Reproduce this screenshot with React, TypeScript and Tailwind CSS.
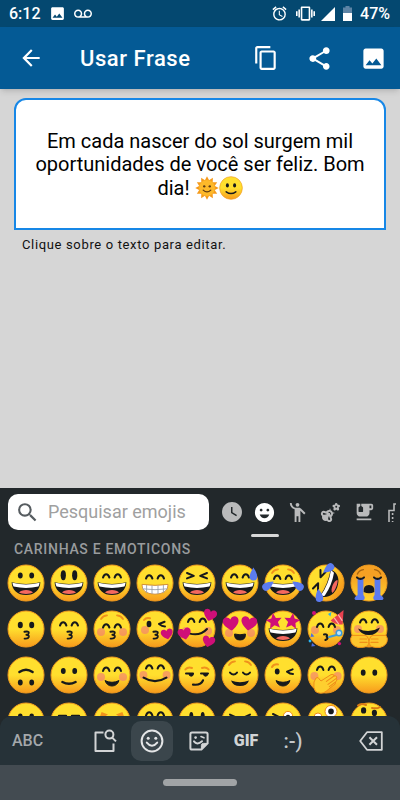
import React from "react";
import {
  MdAlarm,
  MdArrowBack,
  MdContentCopy,
  MdEmojiEmotions,
  MdEmojiFoodBeverage,
  MdEmojiNature,
  MdEmojiPeople,
  MdImage,
  MdSearch,
  MdShare,
  MdVibration,
  MdVoicemail,
  MdWatchLater,
} from "react-icons/md";

const INK = "#16191c";
const PINK = "#cf0f78";
const TEAR = "#5b7bf0";
const BROW = "#f0911c";

/* ---------- emoji parts, all drawn around 0,0 ---------- */

const Head = ({ fill = "url(#skin)" }: { fill?: string }) => (
  <circle r="18" fill={fill} stroke="#f09a1d" strokeWidth="1" />
);

const Dots = ({ y = -7, rx = 2.4, ry = 3, gap = 5.7 }: { y?: number; rx?: number; ry?: number; gap?: number }) => (
  <g fill={INK}>
    <ellipse cx={-gap} cy={y} rx={rx} ry={ry} />
    <ellipse cx={gap} cy={y} rx={rx} ry={ry} />
  </g>
);

const Arcs = ({ y = -5 }: { y?: number }) => (
  <g transform={`translate(0 ${y})`} fill="none" stroke={INK} strokeWidth="2" strokeLinecap="round">
    <path d="M-9 0Q-8 -3.4 -5.8 -3.4T-2.6 0" />
    <path d="M9 0Q8 -3.4 5.8 -3.4T2.6 0" />
  </g>
);

const Squint = () => (
  <g fill="none" stroke={INK} strokeWidth="2" strokeLinecap="round" strokeLinejoin="round">
    <path d="M-10 -10L-3.2 -7.2L-10 -4.6" />
    <path d="M10 -10L3.2 -7.2L10 -4.6" />
  </g>
);

const Grin = () => (
  <g>
    <path d="M-14.4 -.8Q0 2.6 14.4 -.8C14 7 8.6 12 0 12S-14 7 -14.4 -.8Z" fill={INK} />
    <path d="M-13.6 -.2Q0 3.2 13.6 -.2Q13.3 2 12.4 3.6Q0 6.4 -12.4 3.6Q-13.3 2 -13.6 -.2Z" fill="#fff" />
    <path d="M-7 9.6C-5 6.2 5 6.2 7 9.6C4.6 11.4 -4.6 11.4 -7 9.6Z" fill="#f4685f" />
  </g>
);

const SmallSmile = ({ y = 6 }: { y?: number }) => (
  <path d={`M-7 ${y}Q0 ${y + 3.4} 7 ${y}Q5 ${y + 5.4} 0 ${y + 5.4}T-7 ${y}Z`} fill={INK} stroke={INK} strokeWidth="1" strokeLinejoin="round" />
);

const Line = ({ d, color = INK, w = 2 }: { d: string; color?: string; w?: number }) => (
  <path d={d} fill="none" stroke={color} strokeWidth={w} strokeLinecap="round" strokeLinejoin="round" />
);

const KissMouth = () => <Line d="M-1.6 2.8Q3 1.8 2.8 4Q2.6 5.6 .4 5.8Q3.2 6 2.8 8Q2.2 10 -1.4 9.6" w={1.9} />;

const Blush = ({ y = 2, x = 11 }: { y?: number; x?: number }) => (
  <g fill="#f2777a" opacity=".6">
    <circle cx={-x} cy={y} r="4" />
    <circle cx={x} cy={y} r="4" />
  </g>
);

const Brows = () => <Line d="M-11 -10Q-9 -13.4 -5 -13.6M11 -10Q9 -13.4 5 -13.6" color={BROW} w={1.8} />;

const Heart = ({ x, y, s = 1, r = 0 }: { x: number; y: number; s?: number; r?: number }) => (
  <path
    transform={`translate(${x} ${y}) rotate(${r}) scale(${s})`}
    d="M0 6C-3 4 -6.6 1 -6.6 -2C-6.6 -6 -1.6 -6.6 0 -3.2C1.6 -6.6 6.6 -6 6.6 -2C6.6 1 3 4 0 6Z"
    fill={PINK}
  />
);

const Star = ({ x, y, r = 0 }: { x: number; y: number; r?: number }) => (
  <path
    transform={`translate(${x} ${y}) rotate(${r})`}
    d="M0 -8L2.3 -2.8L8 -2.2L3.7 1.6L5 7.2L0 4.3L-5 7.2L-3.7 1.6L-8 -2.2L-2.3 -2.8Z"
    fill={PINK}
  />
);

const Drop = ({ x, y, r = 0 }: { x: number; y: number; r?: number }) => (
  <path transform={`translate(${x} ${y}) rotate(${r})`} d="M0 -7Q3.8 -1 3.8 2.4A3.8 3.8 0 0 1 -3.8 2.4Q-3.8 -1 0 -7Z" fill={TEAR} />
);

const WinkEye = () => <Line d="M9.6 -9.6L4 -7.4Q7 -5 10 -5" />;

const emojis: { name: string; art: React.ReactNode }[] = [
  { name: "rosto sorridente", art: <><Head /><Dots y={-7.4} /><Grin /></> },
  { name: "rosto com olhos grandes", art: <><Head /><Dots y={-7.8} rx={2.6} ry={5} /><Grin /></> },
  { name: "rosto com olhos sorridentes", art: <><Head /><Arcs y={-5.4} /><Grin /></> },
  {
    name: "rosto contente",
    art: (
      <>
        <Head />
        <Arcs y={-4.4} />
        <path d="M-13 1.4Q0 3.4 13 1.4Q13.4 10.8 0 11.2Q-13.4 10.8 -13 1.4Z" fill="#fff" stroke="#c67c2c" strokeWidth=".8" />
        <path d="M-12.6 5.8Q0 7.6 12.6 5.8M-8.4 2V9.8M-3 2.4V11M3 2.4V11M8.4 2V9.8" fill="none" stroke="#99a2aa" strokeWidth=".9" />
      </>
    ),
  },
  { name: "rosto com olhos semicerrados", art: <><Head /><Squint /><Grin /></> },
  { name: "rosto com gota de suor", art: <><Head /><Arcs y={-5.4} /><Grin /><Drop x={13.4} y={-8.6} /></> },
  {
    name: "rosto chorando de rir",
    art: (
      <>
        <Head /><Brows /><Arcs y={-4} /><Grin />
        <Drop x={-15} y={2.6} r={55} /><Drop x={15} y={2.6} r={-55} />
      </>
    ),
  },
  {
    name: "rolando no chão de rir",
    art: (
      <>
        <Head fill="url(#skinSide)" />
        <g transform="rotate(-68)">
          <Squint />
          <Grin />
          <Drop x={-14.4} y={-1.6} r={60} />
          <Drop x={14.4} y={-3} r={-60} />
        </g>
      </>
    ),
  },
  {
    name: "rosto chorando alto",
    art: (
      <>
        <Head fill="url(#skinSad)" />
        <Line d="M-11.6 -9Q-10 -12.8 -5.6 -13.4M11.6 -9Q10 -12.8 5.6 -13.4" color="#a8650f" w={1.4} />
        <path d="M-5.4 9Q-6 2 0 2T5.4 9Q0 11.6 -5.4 9Z" fill={INK} />
        <path d="M-11.4 -5H-5.6V12Q-3 15 -5.4 17H-13.4Q-16.4 15.4 -11.4 12ZM11.4 -5H5.6V12Q3 15 5.4 17H13.4Q16.4 15.4 11.4 12Z" fill={TEAR} />
        <Line d="M-12 -5.6Q-8.6 -2.6 -5 -5.6M12 -5.6Q8.6 -2.6 5 -5.6" />
      </>
    ),
  },

  { name: "rosto beijando", art: <><Head /><Dots y={-4} rx={2.5} ry={3.2} /><KissMouth /></> },
  { name: "beijo com olhos sorridentes", art: <><Head /><Arcs y={-3.4} /><KissMouth /></> },
  { name: "beijo com olhos fechados", art: <><Head /><Blush y={3} /><Brows /><Arcs y={-1.4} /><KissMouth /></> },
  {
    name: "rosto mandando beijo",
    art: (
      <>
        <Head />
        <circle cx="-10" cy="1" r="4" fill="#f2777a" opacity=".6" />
        <Line d="M-11 -9Q-9 -11.8 -5 -10.8" color={BROW} />
        <ellipse cx="-6" cy="-5" rx="2.4" ry="3.2" fill={INK} />
        <g transform="translate(0 2.4)"><WinkEye /></g>
        <KissMouth />
        <Heart x={12} y={5} s={0.9} r={-12} />
      </>
    ),
  },
  {
    name: "rosto com três corações",
    art: (
      <>
        <Head /><Blush /><Arcs y={-7} />
        <Line d="M-8 4.4Q3 7.6 10 0" />
        <Heart x={13} y={-14} r={16} /><Heart x={-12.4} y={4.6} r={-14} /><Heart x={11.6} y={12.4} s={0.95} r={14} />
      </>
    ),
  },
  {
    name: "olhos de coração",
    art: (
      <>
        <Head /><Blush y={4} />
        <Heart x={-9} y={-5.6} s={1.2} r={-8} /><Heart x={9} y={-5.6} s={1.2} r={8} />
        <path d="M-5.4 5Q0 6.6 5.4 5Q5.8 11 0 11T-5.4 5Z" fill={INK} stroke={INK} strokeLinejoin="round" />
      </>
    ),
  },
  { name: "olhos de estrela", art: <><Head /><Grin /><Star x={-9} y={-8} r={-8} /><Star x={9} y={-8} r={8} /></> },
  {
    name: "rosto festivo",
    art: (
      <>
        <Head /><Blush y={1} /><Arcs y={-2} />
        <path d="M4.6 -8.4L17.6 -19L16.6 -4.6Q10 -3.6 4.6 -8.4Z" fill="#e8414f" />
        <Line d="M8.4 -10.8L12.6 -5.2M12.4 -14L16 -8.6" color="#f9b7b0" w={1.2} />
        <Line d="M-2 5.4Q2.4 5 .6 7.6Q3 9.4 -.6 11" />
        <Line d="M3 8L10.4 6" color="#3d9bd8" />
        <circle cx="13" cy="4" r="2.8" fill="#bfe6f7" stroke="#3d9bd8" strokeWidth="1.5" />
        <circle cx="-12" cy="-16" r="2" fill={PINK} />
        <path d="M2 -15L5.4 -17L4.4 -12.6Z" fill="#27b2ea" />
        <path d="M-14.6 4L-11.6 7.4L-15.4 8ZM-14 14L-10.6 17L-14.6 17.4Z" fill="#4a6fe6" />
        <circle cx="-16" cy="12" r="1.4" fill="#29b6f6" />
        <circle cx="13.4" cy="14.6" r="1.7" fill={PINK} />
      </>
    ),
  },
  {
    name: "rosto abraçando",
    art: (
      <>
        <Head /><Blush y={0} /><Arcs y={-6.4} />
        <path d="M-11 -.6Q0 5 11 -1.6Q8 6 0 6T-11 -.6Z" fill={INK} />
        <path d="M-17 6.4H-4Q-1.4 6.6 -1 9.4Q1 12 -1.4 17Q-5 19 -11 18.4Q-18.6 16.6 -18.4 9.6Z" fill="#fdc62d" stroke="#f08f18" strokeWidth="1" />
        <path d="M17 6.4H4Q1.4 6.6 1 9.4Q-1 12 1.4 17Q5 19 11 18.4Q18.6 16.6 18.4 9.6Z" fill="#fdc62d" stroke="#f08f18" strokeWidth="1" />
        <Line d="M-9 10H-2.4M-9 13.4H-2M9 10H2.4M9 13.4H2" color="#f08f18" w={1.2} />
      </>
    ),
  },

  { name: "rosto de cabeça para baixo", art: <><Head /><Dots y={7.6} rx={2.4} ry={3} /><Line d="M-6.6 -3Q0 -7.6 6.6 -3" w={2.4} /></> },
  { name: "rosto levemente sorridente", art: <><Head /><Dots y={-4} rx={2.4} ry={3} /><Line d="M-6.6 7Q0 10.4 6.6 7" w={2.4} /></> },
  { name: "rosto corado", art: <><Head /><Blush /><Arcs y={-4} /><SmallSmile y={5.6} /></> },
  { name: "rosto sorrindo", art: <><Head /><Blush y={0} x={11.6} /><Arcs y={-6.4} /><Line d="M-11.4 2.6Q0 9.6 11.4 2.6" w={2.2} /></> },
  {
    name: "sorriso maroto",
    art: (
      <>
        <Head />
        <Line d="M-11.6 -5.6Q-9 -8.4 -5 -7M11.6 -5.6Q9 -8.4 5 -7" color={BROW} />
        <Line d="M-11 -1.4H-4M4 -1.4H11" />
        <path d="M-8 -1.4H-3.6A2.2 2.6 0 0 1 -8 -1.4ZM6.4 -1.4H10.8A2.2 2.6 0 0 1 6.4 -1.4Z" fill={INK} stroke={INK} />
        <Line d="M-4 9.6Q4 10.6 6 5.4" w={2.2} />
      </>
    ),
  },
  {
    name: "rosto aliviado",
    art: (
      <>
        <Head /><Brows />
        <Line d="M-10 -2.4Q-6.4 1.4 -3 -2.4M10 -2.4Q6.4 1.4 3 -2.4" />
        <path d="M-9 5.4Q0 9 9 5.4Q7 11 0 11T-9 5.4Z" fill={INK} />
      </>
    ),
  },
  {
    name: "rosto piscando",
    art: (
      <>
        <Head />
        <Line d="M-11 -8Q-9.4 -11 -5 -10.6" color={BROW} />
        <ellipse cx="-5.8" cy="-3.4" rx="2.4" ry="3" fill={INK} />
        <g transform="translate(0 4)"><WinkEye /></g>
        <SmallSmile y={5.6} />
      </>
    ),
  },
  {
    name: "mão sobre a boca",
    art: (
      <>
        <Head /><Blush y={1} x={11.6} /><Arcs y={-5} />
        <path d="M-12 7L-10 3Q-8 1 -6 5L-5 6L5 -.4Q8 -1.6 8 1Q11.4 .4 10.4 3.4Q12 4.8 9.6 7Q10 9.6 7 10.6L0 16.4Q-5 20 -10.4 16.6Q-13 13 -12 7Z" fill="#fecf2f" stroke="#f08f18" strokeWidth="1" />
        <Line d="M8 1L.4 6.4M10 3.6L2 9.4M9.2 7.2L3.4 11.6" color="#f08f18" w={1.1} />
      </>
    ),
  },
  { name: "rosto sem boca", art: <><Head /><Dots y={-2.4} rx={2.4} ry={3.2} gap={5.8} /></> },

  { name: "rosto neutro", art: <><Head /><Dots y={-4.4} /><Line d="M-7 7H7" /></> },
  { name: "rosto inexpressivo", art: <><Head /><Line d="M-10 -5H-3M3 -5H10M-7 7H7" w={2.4} /></> },
  {
    name: "rosto perseverante",
    art: (
      <>
        <Head />
        <path d="M-12 -4.6L-10.4 -9L-4 -6.4L-8 -4ZM12 -4.6L10.4 -9L4 -6.4L8 -4Z" fill={BROW} />
        <Line d="M-7 9Q0 5 7 9" />
      </>
    ),
  },
  { name: "saboreando", art: <><Head /><Arcs y={-5.4} /><Line d="M-9 4Q0 10 9 4" /></> },
  { name: "rosto com a língua de fora", art: <><Head /><Dots y={-4.6} rx={2} ry={4.4} /><Grin /></> },
  {
    name: "língua com olhos fechados",
    art: <><Head /><Line d="M-10 -6.4L-4 -3.6L-10 -1M10 -6.4L4 -3.6L10 -1" /><Line d="M-8 5Q0 10 8 5" /></>,
  },
  {
    name: "língua com piscadela",
    art: <><Head /><Line d="M-10 -7L-4 -4L-10 -2" /><circle cx="5" cy="-5" r="4.6" fill="#fff" stroke="#f08f18" /><circle cx="5" cy="-4" r="2.2" fill={INK} /><Line d="M-8 6Q0 11 8 6" /></>,
  },
  {
    name: "rosto maluco",
    art: (
      <>
        <Head />
        <circle cx="5" cy="-9.6" r="6" fill="#fff" stroke="#f08f18" />
        <circle cx="5" cy="-9.6" r="2.8" fill={INK} />
        <circle cx="-8" cy="-4" r="4" fill="#fff" stroke="#f08f18" />
      </>
    ),
  },
  {
    name: "sobrancelha levantada",
    art: <><Head /><Line d="M-11 -15.6Q-8 -18.4 -3 -16M3 -13Q8 -12 11 -14" color="#d97a14" /><ellipse cx="-5.4" cy="-10.6" rx="2.6" ry="3.2" fill={INK} /><ellipse cx="5.4" cy="-8" rx="2.6" ry="3.2" fill={INK} /></>,
  },
];

const InlineSun = () => (
  <svg viewBox="-19 -19 38 38" role="img" aria-label="sol com rosto" className="inline-block size-6 align-[-5px]">
    {Array.from({ length: 12 }, (_, i) => (
      <path key={i} transform={`rotate(${i * 30})`} d="M-4 -11L0 -18.6L4 -11Z" fill="#f59a1c" />
    ))}
    <circle r="12.6" fill="#fdb92a" />
    <circle cx="-4.4" cy="-2.6" r="1.9" fill="#5d3a12" />
    <circle cx="4.4" cy="-2.6" r="1.9" fill="#5d3a12" />
    <Line d="M-6 3.4Q0 9 6 3.4" color="#5d3a12" />
  </svg>
);

const InlineSmile = () => (
  <svg viewBox="-19 -19 38 38" role="img" aria-label="rosto levemente sorridente" className="inline-block size-6 align-[-5px]">
    <Head /><Dots y={-4} rx={2.4} ry={3.4} />
    <Line d="M-7.6 6Q0 11.6 7.6 6" w={2.4} />
  </svg>
);

/* ---------- keyboard icons ---------- */

const TransportIcon = () => (
  <svg viewBox="0 0 22 22" className="size-[22px] shrink-0" fill="none" stroke="#b9babb" strokeWidth="1.6">
    <path d="M3 21V9.5H8V3H18V21" />
    <path d="M6.6 12V21M11 6V21" strokeDasharray="2 2" />
  </svg>
);

const EmojiKitIcon = () => (
  <svg viewBox="0 0 24 24" className="size-6" fill="none" stroke="#d2d4d5" strokeWidth="2">
    <path d="M10.5 3.5H2.5V22H20.5V14.5" strokeLinejoin="round" />
    <circle cx="16.4" cy="5.6" r="4" />
    <path d="M19.2 8.6L23 12.4" />
  </svg>
);

const FaceIcon = () => (
  <svg viewBox="0 0 24 24" className="size-6" fill="none" stroke="#e4e5e6" strokeWidth="2">
    <circle cx="12" cy="12" r="10.4" />
    <path d="M6.8 13.6Q12 20 17.2 13.6" strokeLinecap="round" />
    <circle cx="8.2" cy="9.2" r="1.5" fill="#e4e5e6" stroke="none" />
    <circle cx="15.8" cy="9.2" r="1.5" fill="#e4e5e6" stroke="none" />
  </svg>
);

const StickerIcon = () => (
  <svg viewBox="0 0 20 20" className="size-5" fill="none" stroke="#d2d4d5" strokeWidth="2" strokeLinejoin="round">
    <path d="M3 1.4H17Q18.6 1.4 18.6 3V12.4L12.4 18.6H3Q1.4 18.6 1.4 17V3Q1.4 1.4 3 1.4Z" />
    <path d="M18.6 12.4H14.4Q12.4 12.4 12.4 14.4V18.6Z" fill="#d2d4d5" strokeWidth="1" />
    <path d="M5 10.4Q8 14.6 13 10.2" strokeLinecap="round" />
    <path d="M12 5.6L15 6.8" strokeLinecap="round" strokeWidth="1.6" />
    <circle cx="6.6" cy="6.6" r="1.3" fill="#d2d4d5" stroke="none" />
  </svg>
);

const BackspaceIcon = () => (
  <svg viewBox="0 0 24 20" className="h-5 w-6" fill="none" stroke="#d2d4d5" strokeWidth="1.8" strokeLinejoin="round">
    <path d="M8 1.2H22.8V18.8H8L1.2 10Z" />
    <path d="M10.4 6.2L18 13.8M18 6.2L10.4 13.8" strokeWidth="2" />
  </svg>
);

const BatteryIcon = () => (
  <svg viewBox="0 0 9 15" className="ml-2 h-[15px] w-[9px]">
    <path d="M2.5 0H6.5V1.5H9V7H0V1.5H2.5Z" fill="#5d84a5" />
    <path d="M0 7H9V15H0Z" fill="#fff" />
  </svg>
);

const tabs = [
  { label: "Recentes", icon: <MdWatchLater size={24} /> },
  { label: "Carinhas", icon: <MdEmojiEmotions size={23} />, active: true },
  { label: "Pessoas", icon: <MdEmojiPeople size={23} /> },
  { label: "Natureza", icon: <MdEmojiNature size={23} /> },
  { label: "Comidas", icon: <MdEmojiFoodBeverage size={22} /> },
  { label: "Viagens", icon: <TransportIcon /> },
];

const navItems = [
  { label: "Buscar", icon: <EmojiKitIcon /> },
  { label: "Emojis", icon: <FaceIcon />, active: true },
  { label: "Figurinhas", icon: <StickerIcon /> },
  { label: "GIF", icon: <span className="text-base font-black text-[#d2d4d5]">GIF</span> },
  { label: "Emoticons", icon: <span className="text-xl font-medium text-[#c4c7c9]">:-)</span> },
];

function StatusBar() {
  return (
    <div className="flex h-[27px] items-center bg-[#044870] pl-[9px] pr-2.5 text-base font-medium text-white">
      <span>6:12</span>
      <MdImage size={17} className="ml-2" />
      <MdVoicemail size={18} className="ml-2" />
      <MdAlarm size={17} className="ml-auto" />
      <MdVibration size={19} className="ml-2" />
      <svg viewBox="0 0 14 14" className="ml-1.5 size-3.5"><path d="M14 0V14H0Z" fill="#fff" /></svg>
      <BatteryIcon />
      <span className="ml-2">47%</span>
    </div>
  );
}

function AppBar() {
  return (
    <header className="z-10 flex h-[62px] items-center bg-[#045a95] pl-[18px] pr-[13px] text-white shadow-md">
      <button aria-label="Voltar"><MdArrowBack size={26} /></button>
      <h1 className="ml-9 text-[22px] font-medium tracking-wide">Usar Frase</h1>
      <div className="ml-auto flex items-center gap-[27px]">
        <button aria-label="Copiar"><MdContentCopy size={26} /></button>
        <button aria-label="Compartilhar"><MdShare size={27} /></button>
        <button aria-label="Imagem"><MdImage size={27} /></button>
      </div>
    </header>
  );
}

function EmojiKeyboard() {
  return (
    <section className="bg-[#22282b]">
      <div className="flex h-[50px] items-start overflow-hidden pl-2 pr-1 pt-1.5">
        <label className="flex h-9 w-[201px] shrink-0 items-center rounded-[10px] bg-white pl-[7px]">
          <MdSearch size={25} className="shrink-0 text-[#565c60]" />
          <input
            type="text"
            aria-label="Pesquisar emojis"
            placeholder="Pesquisar emojis"
            className="ml-2 w-full min-w-0 bg-transparent text-lg text-gray-800 outline-none placeholder:text-[#a0a0a0]"
          />
        </label>
        <div className="ml-1.5 flex min-w-0 flex-1 overflow-hidden">
          {tabs.map((t) => (
            <button
              key={t.label}
              aria-label={t.label}
              className={`flex w-[33px] shrink-0 flex-col items-center gap-1 ${t.active ? "text-white" : "text-[#b9babb]"}`}
            >
              <span className="flex h-9 items-center">{t.icon}</span>
              <span className={`h-[3px] w-7 rounded-full ${t.active ? "bg-[#d8d8d8]" : ""}`} />
            </button>
          ))}
        </div>
      </div>

      <h2 className="flex h-[22px] items-center pl-3.5 text-sm font-medium tracking-wider text-[#999c9e]">
        CARINHAS E EMOTICONS
      </h2>

      <div className="grid h-[156px] auto-rows-[46px] grid-cols-9 overflow-hidden pl-[5px] pr-2.5">
        {emojis.map((e) => (
          <button key={e.name} aria-label={e.name} className="flex items-center justify-center">
            <svg viewBox="-19 -19 38 38" className="size-[38px] shrink-0 overflow-visible">{e.art}</svg>
          </button>
        ))}
      </div>

      <nav className="flex h-[49px] items-center rounded-t-xl bg-[#263238] pl-3 pr-[17px]">
        <button className="w-[72px] text-left text-base font-medium text-[#a4a8ab]">ABC</button>
        <div className="flex gap-[5px]">
          {navItems.map((n) => (
            <button
              key={n.label}
              aria-label={n.label}
              className={`flex h-10 w-[42px] items-center justify-center rounded-[10px] ${n.active ? "bg-[#3b464c]" : ""}`}
            >
              {n.icon}
            </button>
          ))}
        </div>
        <button aria-label="Apagar" className="ml-auto"><BackspaceIcon /></button>
      </nav>

      <div className="flex h-[35px] items-center justify-center bg-[#434b51]">
        <div className="h-[7px] w-[74px] rounded-full bg-[#a1a4a6]" />
      </div>
    </section>
  );
}

export default function App() {
  return (
    <div className="flex min-h-screen flex-col bg-[#d6d6d6] font-['Roboto',sans-serif]">
      <svg className="absolute size-0" aria-hidden="true">
        <defs>
          <linearGradient id="skin" x1="0" y1="0" x2="0" y2="1">
            <stop offset=".5" stopColor="#ffdf2e" />
            <stop offset="1" stopColor="#f79a1c" />
          </linearGradient>
          <linearGradient id="skinSide" x1="0" y1="0" x2="1" y2=".6">
            <stop offset=".45" stopColor="#ffdf2e" />
            <stop offset="1" stopColor="#f79a1c" />
          </linearGradient>
          <linearGradient id="skinSad" x1="0" y1="0" x2="0" y2="1">
            <stop offset=".3" stopColor="#f5a023" />
            <stop offset="1" stopColor="#ffd62e" />
          </linearGradient>
        </defs>
      </svg>
      <StatusBar />
      <AppBar />

      <main className="flex-1 px-3.5 pt-[9px]">
        <div
          role="textbox"
          aria-label="Frase"
          contentEditable
          suppressContentEditableWarning
          className="h-[132px] rounded-t-xl border-2 border-[#1787e6] bg-white px-4 pt-[30px] text-center text-xl leading-[23px] text-black outline-none"
        >
          Em cada nascer do sol surgem mil oportunidades de você ser feliz. Bom dia! <InlineSun /><InlineSmile />
        </div>
        <p className="mt-1.5 pl-2 text-[13px] leading-[18px] tracking-wider text-[#111]">Clique sobre o texto para editar.</p>
      </main>

      <EmojiKeyboard />
    </div>
  );
}
